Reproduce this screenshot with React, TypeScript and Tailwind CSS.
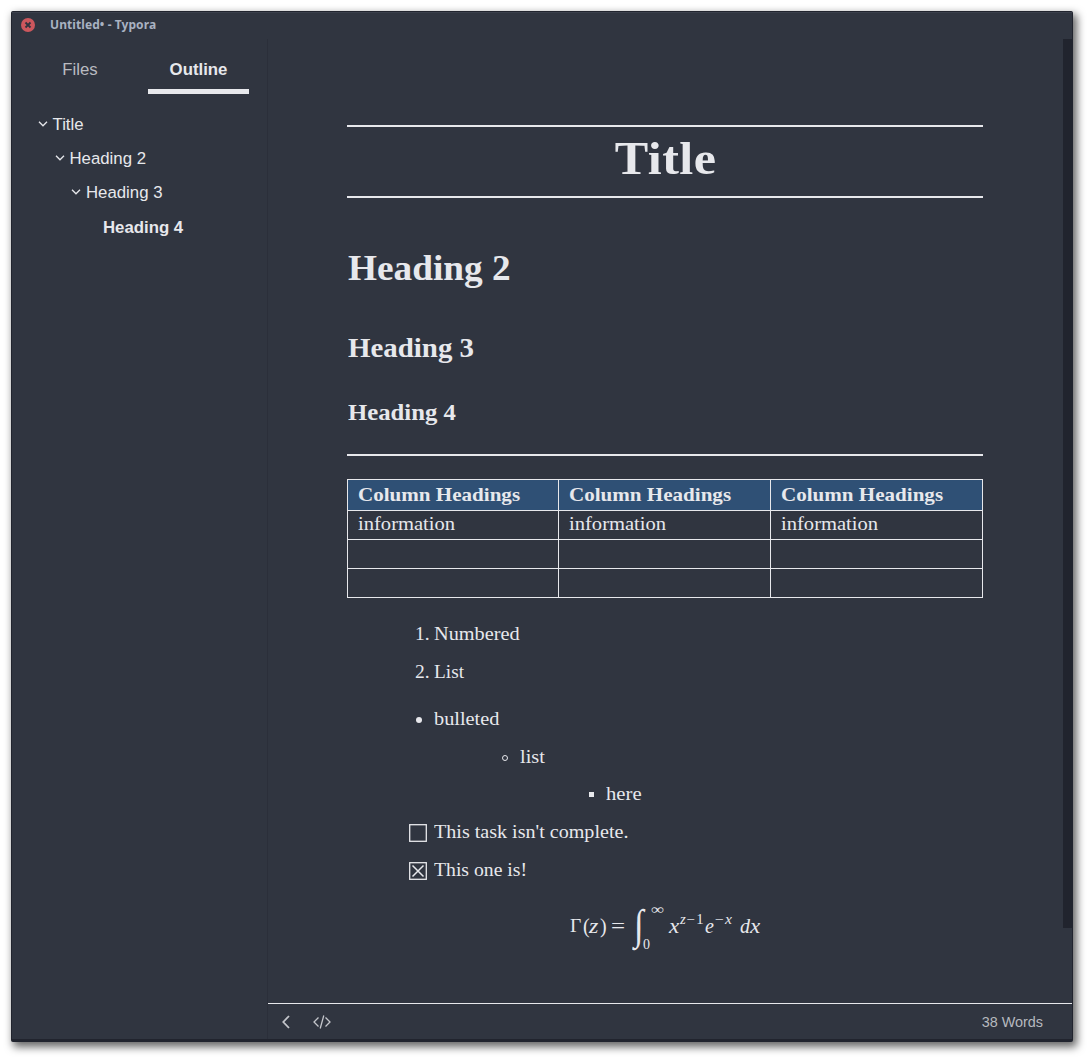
import React from "react";

const serif = "font-['Liberation_Serif',serif]";

function Chevron() {
  return (
    <svg width="10" height="6" viewBox="0 0 10 6" fill="none" stroke="#e7e8ec" strokeWidth="1.3" className="mr-[5px] shrink-0">
      <path d="M1 0.8 L5 4.8 L9 0.8" />
    </svg>
  );
}

function OutlineItem({ label, pad, open = true }: { label: string; pad: string; open?: boolean }) {
  return (
    <div className={`flex items-center ${pad} ${open ? "h-[34px]" : "h-[36px] font-bold"}`}>
      {open && <Chevron />}
      <span className="pt-px">{label}</span>
    </div>
  );
}

/* Serif text drawn slightly wider than its natural set width. */
function Wide({ children, by = "scale-x-[1.055]" }: { children: React.ReactNode; by?: string }) {
  return <span className={`inline-block origin-left whitespace-nowrap ${by}`}>{children}</span>;
}

function ListRow({ marker, children, pad, by = "scale-x-[1.04]" }: { marker: React.ReactNode; children: React.ReactNode; pad: string; by?: string }) {
  return (
    <li className={`flex h-[30px] ${pad}`}>
      <span className="flex w-[26px] shrink-0 items-center">{marker}</span>
      <Wide by={by}>{children}</Wide>
    </li>
  );
}

function Checkbox({ checked = false }: { checked?: boolean }) {
  return (
    <svg width="18" height="18" viewBox="0 0 18 18" fill="none" stroke="#e7e8ec" strokeWidth="1.3" className="ml-px mt-[2px]">
      <rect x="0.7" y="0.7" width="16.6" height="16.6" />
      {checked && <path d="M3.5 3.5 L14.5 14.5 M14.5 3.5 L3.5 14.5" strokeWidth="1.5" />}
    </svg>
  );
}

function Formula() {
  return (
    <div className="ml-[223px] flex h-[48px] items-start whitespace-nowrap text-[20px] leading-[48px]">
      <span className="w-[13px] text-[19.5px]">Γ</span>
      <span className="w-[6px]">(</span>
      <span className="w-[11px] origin-left scale-x-[1.2] italic">z</span>
      <span className="w-[11px]">)</span>
      <span className="w-[23px] origin-left scale-x-[1.25]">=</span>
      <span className="w-[17px]">
        <span className="inline-block scale-y-[1.22] text-[35px] italic">∫</span>
      </span>
      <span className="flex w-[18px] flex-col text-[14px] leading-[14px]">
        <span className="mt-px origin-left scale-x-[1.3]">∞</span>
        <span className="ml-[-8px] mt-[21px]">0</span>
      </span>
      <span className="w-[11px] origin-left scale-x-[1.15] italic">x</span>
      <span className="w-[25px] origin-left translate-y-[-6px] scale-x-[1.05] text-[14px]"><i className="mr-[1px]">z</i>−<span className="ml-[1px]">1</span></span>
      <span className="w-[10px] italic">e</span>
      <span className="w-[25px] origin-left translate-y-[-6px] scale-x-[1.12] text-[14px]">−<i className="ml-[1px]">x</i></span>
      <span className="w-[10px] italic">d</span>
      <span className="origin-left scale-x-[1.15] italic">x</span>
    </div>
  );
}

const headings = ["Column Headings", "Column Headings", "Column Headings"];
const rows = [["information", "information", "information"], ["", "", ""], ["", "", ""]];

export default function App() {
  return (
    <div className="h-[1061px] w-[1092px] overflow-hidden bg-white pl-[11px] pt-[11px]">
      <div className="flex h-[1031px] w-[1062px] flex-col rounded-[2px] border border-b-[3px] border-[#21242e] bg-[#303540] shadow-[3px_4px_9px_1px_rgba(0,0,0,0.6)]">
        <header className="flex h-[27px] shrink-0 items-center border-t border-[#3b404c] pb-[2px] pl-[9px]">
          <svg width="14" height="14" viewBox="0 0 14 14">
            <circle cx="7" cy="7" r="7" fill="#cc575d" />
            <path d="M4.5 4.5 L9.5 9.5 M9.5 4.5 L4.5 9.5" stroke="#2f343f" strokeWidth="1.8" />
          </svg>
          <span className="ml-[15px] font-['Noto_Sans',sans-serif] text-[12px] font-bold tracking-[0.08px] text-[#a9b2c2]">Untitled• - Typora</span>
        </header>

        <div className="flex min-h-0 flex-1">
          <aside className="w-[256px] shrink-0 border-r border-[#2b2f3a] font-['Liberation_Sans',sans-serif] text-[16.8px] text-[#e7e8ec]">
            <div className="flex h-[55px] pl-[18px] text-center leading-[62px]">
              <div className="w-[100px] text-[#b9bbc0]">Files</div>
              <div className="ml-[18px] w-[101px] border-b-[5px] border-[#e7e8ec] font-bold">Outline</div>
            </div>
            <nav className="mt-[13px]">
              <OutlineItem label="Title" pad="pl-[25.5px]" />
              <OutlineItem label="Heading 2" pad="pl-[42.5px]" />
              <OutlineItem label="Heading 3" pad="pl-[59px]" />
              <OutlineItem label="Heading 4" pad="pl-[91px]" open={false} />
            </nav>
          </aside>

          <main className="flex min-w-0 flex-1 flex-col">
            <div className="flex min-h-0 flex-1">
              <article className={`ml-[79px] mr-auto w-[636px] pt-[86px] text-[#e7e8ec] ${serif}`}>
                <h1 className="h-[73px] border-y-2 border-[#e7e8ec] pl-[2px] text-center text-[46px] font-bold leading-[63px]">
                  <span className="inline-block scale-x-[1.09] tracking-[0.4px]">Title</span>
                </h1>
                <h2 className="mt-[45px] pl-px text-[35px] font-bold leading-[52px]"><Wide by="scale-x-[1.065]">Heading 2</Wide></h2>
                <h3 className="mt-[33px] pl-px text-[27px] font-bold leading-[40px]"><Wide by="scale-x-[1.07]">Heading 3</Wide></h3>
                <h4 className="mt-[24px] pl-px text-[23px] font-bold leading-[42px]"><Wide by="scale-x-[1.075]">Heading 4</Wide></h4>
                <hr className="mt-[20px] border-t-2 border-[#e7e8ec]" />

                <div className="mt-[23px] grid grid-cols-[211px_212px_212px] grid-rows-[31px_29px_29px_29px] border-l border-t border-[#e7e8ec] text-[19.5px]">
                  {headings.map((h, i) => (
                    <div key={i} className="border-b border-r border-[#e7e8ec] bg-[#2f5075] pl-[10px] font-bold leading-[29px]"><Wide by="scale-x-[1.08]">{h}</Wide></div>
                  ))}
                  {rows.flat().map((c, i) => (
                    <div key={i} className="border-b border-r border-[#e7e8ec] pl-[10px] leading-[25px]"><Wide>{c}</Wide></div>
                  ))}
                </div>

                <div className="text-[19.5px] leading-[30px]">
                  <ol className="mt-[21px] space-y-[8px]">
                    <ListRow marker="1." pad="pl-[68px] [&>span:first-child]:w-[18.5px]">Numbered</ListRow>
                    <ListRow marker="2." pad="pl-[68px] [&>span:first-child]:w-[18.5px]" by="scale-x-[0.99]">List</ListRow>
                  </ol>
                  <ul className="mt-[17px] space-y-[7.7px]">
                    <ListRow marker={<span className="ml-[8.5px] mt-[1px] size-[6px] rounded-full bg-[#e7e8ec]" />} pad="pl-[60.5px]">bulleted</ListRow>
                    <ListRow marker={<span className="ml-[8px] mt-[2px] size-[6px] rounded-full border border-[#e7e8ec]" />} pad="pl-[147px]">list</ListRow>
                    <ListRow marker={<span className="ml-[9px] size-[5px] bg-[#e7e8ec]" />} pad="pl-[233px]" by="scale-x-[1.06]">here</ListRow>
                    <ListRow marker={<Checkbox />} pad="pl-[60.5px]" by="scale-x-[1.03]">This task isn't complete.</ListRow>
                    <ListRow marker={<Checkbox checked />} pad="pl-[60.5px]" by="scale-x-[1.01]">This one is!</ListRow>
                  </ul>
                </div>
                <div className="mt-[17px]"><Formula /></div>
              </article>
              <div className="h-[889px] w-[9px] bg-[#21242e]" />
            </div>
            <footer className="flex h-[36px] shrink-0 items-center border-t border-[#e7e8ec] pl-[14px] pr-[29px] font-['Liberation_Sans',sans-serif] text-[14.4px] text-[#b6b9bf]">
              <svg width="8" height="14" viewBox="0 0 8 14" fill="none" stroke="#c4c6cb" strokeWidth="1.8">
                <path d="M7 1 L1.3 7 L7 13" />
              </svg>
              <svg width="18" height="14" viewBox="0 0 18 14" fill="none" stroke="#c4c6cb" strokeWidth="1.3" className="ml-[23px]">
                <path d="M5.5 2.5 L1 7 L5.5 11.5 M12.5 2.5 L17 7 L12.5 11.5 M10.8 0.5 L7.2 13.5" />
              </svg>
              <span className="ml-auto pt-[2px]">38 Words</span>
            </footer>
          </main>
        </div>
      </div>
    </div>
  );
}
